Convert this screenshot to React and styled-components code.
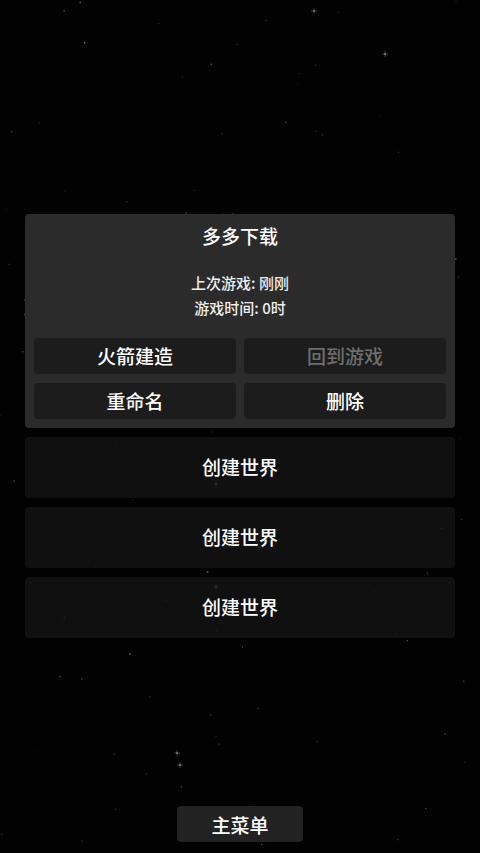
import styled, { createGlobalStyle } from "styled-components";

const GlobalStyle = createGlobalStyle`
	html, body {
		margin: 0;
		padding: 0;
		background: #000;
	}
	body {
		font-family: "Noto Sans CJK SC", "Noto Sans", sans-serif;
		color: #fff;
	}
`;

const Screen = styled.div`
	position: relative;
	width: 480px;
	height: 853px;
	overflow: hidden;
	background: #020203;
	display: flex;
	flex-direction: column;
	align-items: center;
`;

const Stars = styled.svg`
	position: absolute;
	inset: 0;
	z-index: 0;
`;

const WorldList = styled.div`
	position: relative;
	z-index: 1;
	width: 430px;
	margin-top: 214px;
	display: flex;
	flex-direction: column;
	gap: 9px;
`;

const Panel = styled.div`
	background: #2b2b2b;
	border-radius: 4px;
	padding: 9px;
	display: flex;
	flex-direction: column;
`;

const Title = styled.div`
	text-align: center;
	font-size: 19px;
	font-weight: 500;
	line-height: 26px;
`;

const Info = styled.div`
	margin-top: 21px;
	text-align: center;
	font-size: 15px;
	font-weight: 500;
	line-height: 25px;
	color: #eee;
`;

const ButtonGrid = styled.div`
	margin-top: 18px;
	display: grid;
	grid-template-columns: 1fr 1fr;
	gap: 9px 8px;
`;

const PanelButton = styled.div`
	height: 36px;
	padding-bottom: 1px;
	box-sizing: border-box;
	border-radius: 4px;
	background: #1c1c1c;
	display: flex;
	align-items: center;
	justify-content: center;
	font-size: 19px;
	font-weight: 500;
	color: ${(p) => (p.disabled ? "#6e6e6e" : "#fff")};
`;

const WorldCard = styled.div`
	height: 61px;
	padding-bottom: 2px;
	box-sizing: border-box;
	border-radius: 4px;
	background: rgba(22, 22, 22, 0.75);
	display: flex;
	align-items: center;
	justify-content: center;
	font-size: 19px;
	font-weight: 500;
`;

const Spacer = styled.div`
	flex: 1;
`;

const MenuButton = styled.div`
	position: relative;
	z-index: 1;
	width: 126px;
	height: 36px;
	margin-bottom: 11px;
	border-radius: 4px;
	background: #222;
	display: flex;
	align-items: center;
	justify-content: center;
	font-size: 19px;
	font-weight: 500;
`;

// pseudo-random star positions so the field looks the same every load
const makeStars = () => {
	let seed = 7;
	const rnd = () => {
		seed = (seed * 9301 + 49297) % 233280;
		return seed / 233280;
	};
	const tints = ["#9a9aa0", "#8a8f9c", "#a08a70", "#8c8c8c", "#7d84a0"];
	return Array.from({ length: 130 }, (_, i) => ({
		x: rnd() * 480,
		y: rnd() * 853,
		r: 0.45 + rnd() * 0.5,
		c: tints[i % tints.length],
		o: 0.25 + rnd() * 0.4,
	}));
};

const stars = makeStars();
const bright = [
	[314, 11],
	[385, 54],
	[177, 753],
	[180, 765],
	[216, 484],
	[216, 587],
];

export default function App() {
	return (
		<>
			<GlobalStyle />
			<Screen>
				<Stars width='480' height='853' viewBox='0 0 480 853'>
					{stars.map((s, i) => (
						<circle key={i} cx={s.x} cy={s.y} r={s.r} fill={s.c} opacity={s.o} />
					))}
					{bright.map(([x, y], i) => (
						<g key={"b" + i} stroke='#b8bccc' strokeWidth='0.5' opacity='0.6'>
							<line x1={x - 3} y1={y} x2={x + 3} y2={y} />
							<line x1={x} y1={y - 3} x2={x} y2={y + 3} />
							<circle cx={x} cy={y} r='0.9' fill='#d8dce6' stroke='none' />
						</g>
					))}
				</Stars>
				<WorldList>
					<Panel>
						<Title>多多下载</Title>
						<Info>
							上次游戏: 刚刚
							<br />
							游戏时间: 0时
						</Info>
						<ButtonGrid>
							<PanelButton>火箭建造</PanelButton>
							<PanelButton disabled>回到游戏</PanelButton>
							<PanelButton>重命名</PanelButton>
							<PanelButton>删除</PanelButton>
						</ButtonGrid>
					</Panel>
					<WorldCard>创建世界</WorldCard>
					<WorldCard>创建世界</WorldCard>
					<WorldCard>创建世界</WorldCard>
				</WorldList>
				<Spacer />
				<MenuButton>主菜单</MenuButton>
			</Screen>
		</>
	);
}
